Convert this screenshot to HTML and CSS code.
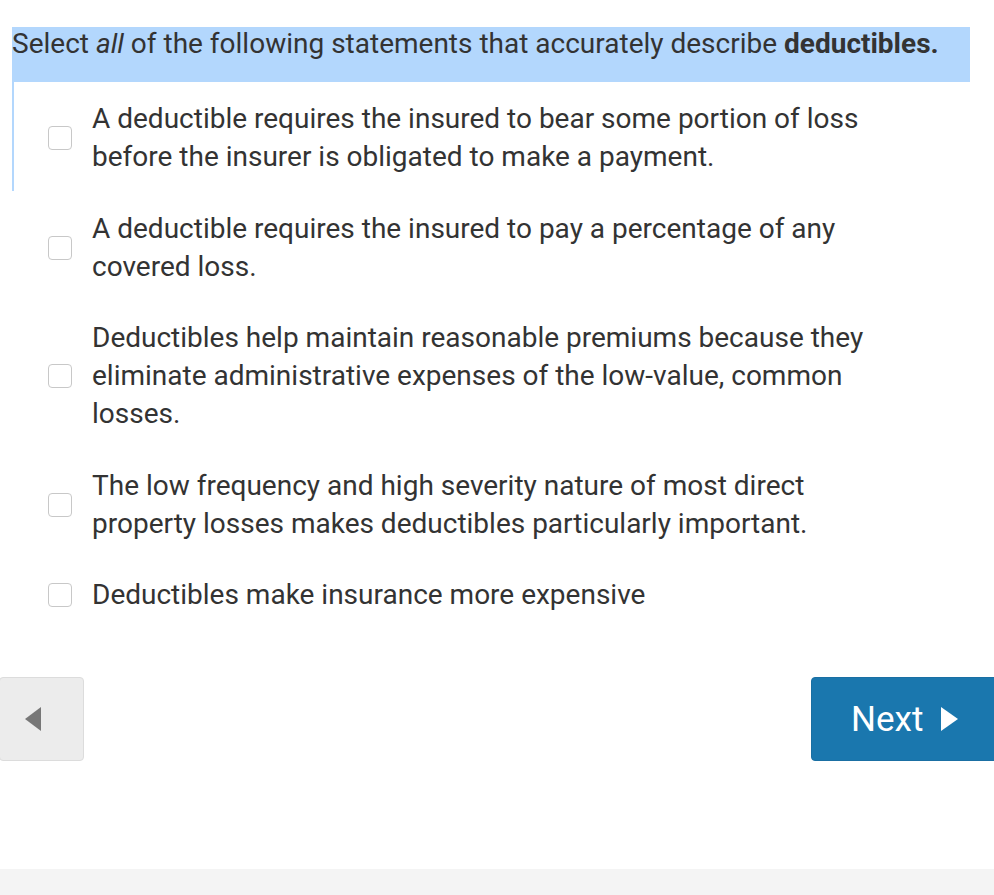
FILE: index.html
```html
<!DOCTYPE html>
<html>
<head>
<meta charset="utf-8">
<link rel="stylesheet" href="styles.css">
</head>
<body>
<div class="page">
  <div class="question">
    <div class="prompt">Select <em>all</em> of the following statements that accurately describe <strong>deductibles.</strong></div>
    <div class="options">
      <label class="option"><span class="box"></span><span class="text">A deductible requires the insured to bear some portion of loss before the insurer is obligated to make a payment.</span></label>
      <label class="option"><span class="box"></span><span class="text">A deductible requires the insured to pay a percentage of any covered loss.</span></label>
      <label class="option"><span class="box"></span><span class="text">Deductibles help maintain reasonable premiums because they eliminate administrative expenses of the low-value, common losses.</span></label>
      <label class="option"><span class="box"></span><span class="text">The low frequency and high severity nature of most direct property losses makes deductibles particularly important.</span></label>
      <label class="option"><span class="box"></span><span class="text">Deductibles make insurance more expensive</span></label>
    </div>
  </div>
  <div class="nav">
    <button class="prev"><span class="tri-left"></span></button>
    <button class="next">Next <span class="tri-right"></span></button>
  </div>
</div>
<div class="footer"></div>
</body>
</html>
```

FILE: styles.css
```css
html, body {
  margin: 0;
  padding: 0;
  background: #fff;
  overflow: hidden;
}
body {
  width: 994px;
  height: 895px;
  position: relative;
  font-family: Roboto, "Liberation Sans", sans-serif;
  color: #333;
}
.page {
  padding-top: 27px;
  height: 842px;
}
.question {
  margin-left: 12px;
}
.prompt {
  background: #b3d7fd;
  width: 958px;
  height: 55px;
  font-size: 28px;
  line-height: 34px;
  box-sizing: border-box;
}
.prompt strong { font-weight: 700; }
.options {
  border-left: 2px solid #b3d7fd;
  border-image: linear-gradient(#b3d7fd 0 110px, transparent 110px) 1;
  padding-top: 18px;
  width: 940px;
}
.option {
  display: flex;
  align-items: center;
  margin-bottom: 33.5px;
  margin-left: -14px;
}
.box {
  width: 22px;
  height: 22px;
  border: 1px solid #c8c8c8;
  border-radius: 4px;
  background: #fff;
  margin-left: 48px;
  flex: none;
}
.text {
  margin-left: 20px;
  font-size: 28px;
  line-height: 38px;
  width: 790px;
}
.nav {
  display: flex;
  justify-content: space-between;
  margin-top: 63px;
}
button {
  font-family: inherit;
  cursor: pointer;
}
.prev {
  width: 85px;
  height: 84px;
  background: #ececec;
  border: 1px solid #dcdcdc;
  border-radius: 4px;
  margin-left: -1px;
  display: flex;
  align-items: center;
  justify-content: center;
  padding: 0;
}
.tri-left {
  width: 0;
  height: 0;
  border-top: 12px solid transparent;
  border-bottom: 12px solid transparent;
  border-right: 16px solid #777;
  margin-left: -18px;
}
.next {
  width: 200px;
  height: 84px;
  background: #1a77ae;
  border: 1px solid #1a6fa3;
  border-radius: 4px;
  color: #fff;
  font-size: 35px;
  display: flex;
  align-items: center;
  padding: 0 0 0 39px;
  margin-right: -17px;
}
.tri-right {
  width: 0;
  height: 0;
  border-top: 12px solid transparent;
  border-bottom: 12px solid transparent;
  border-left: 17px solid #fff;
  margin-left: 18px;
}
.footer {
  position: absolute;
  left: 0;
  right: 0;
  top: 869px;
  height: 26px;
  background: #f4f4f4;
}
```
